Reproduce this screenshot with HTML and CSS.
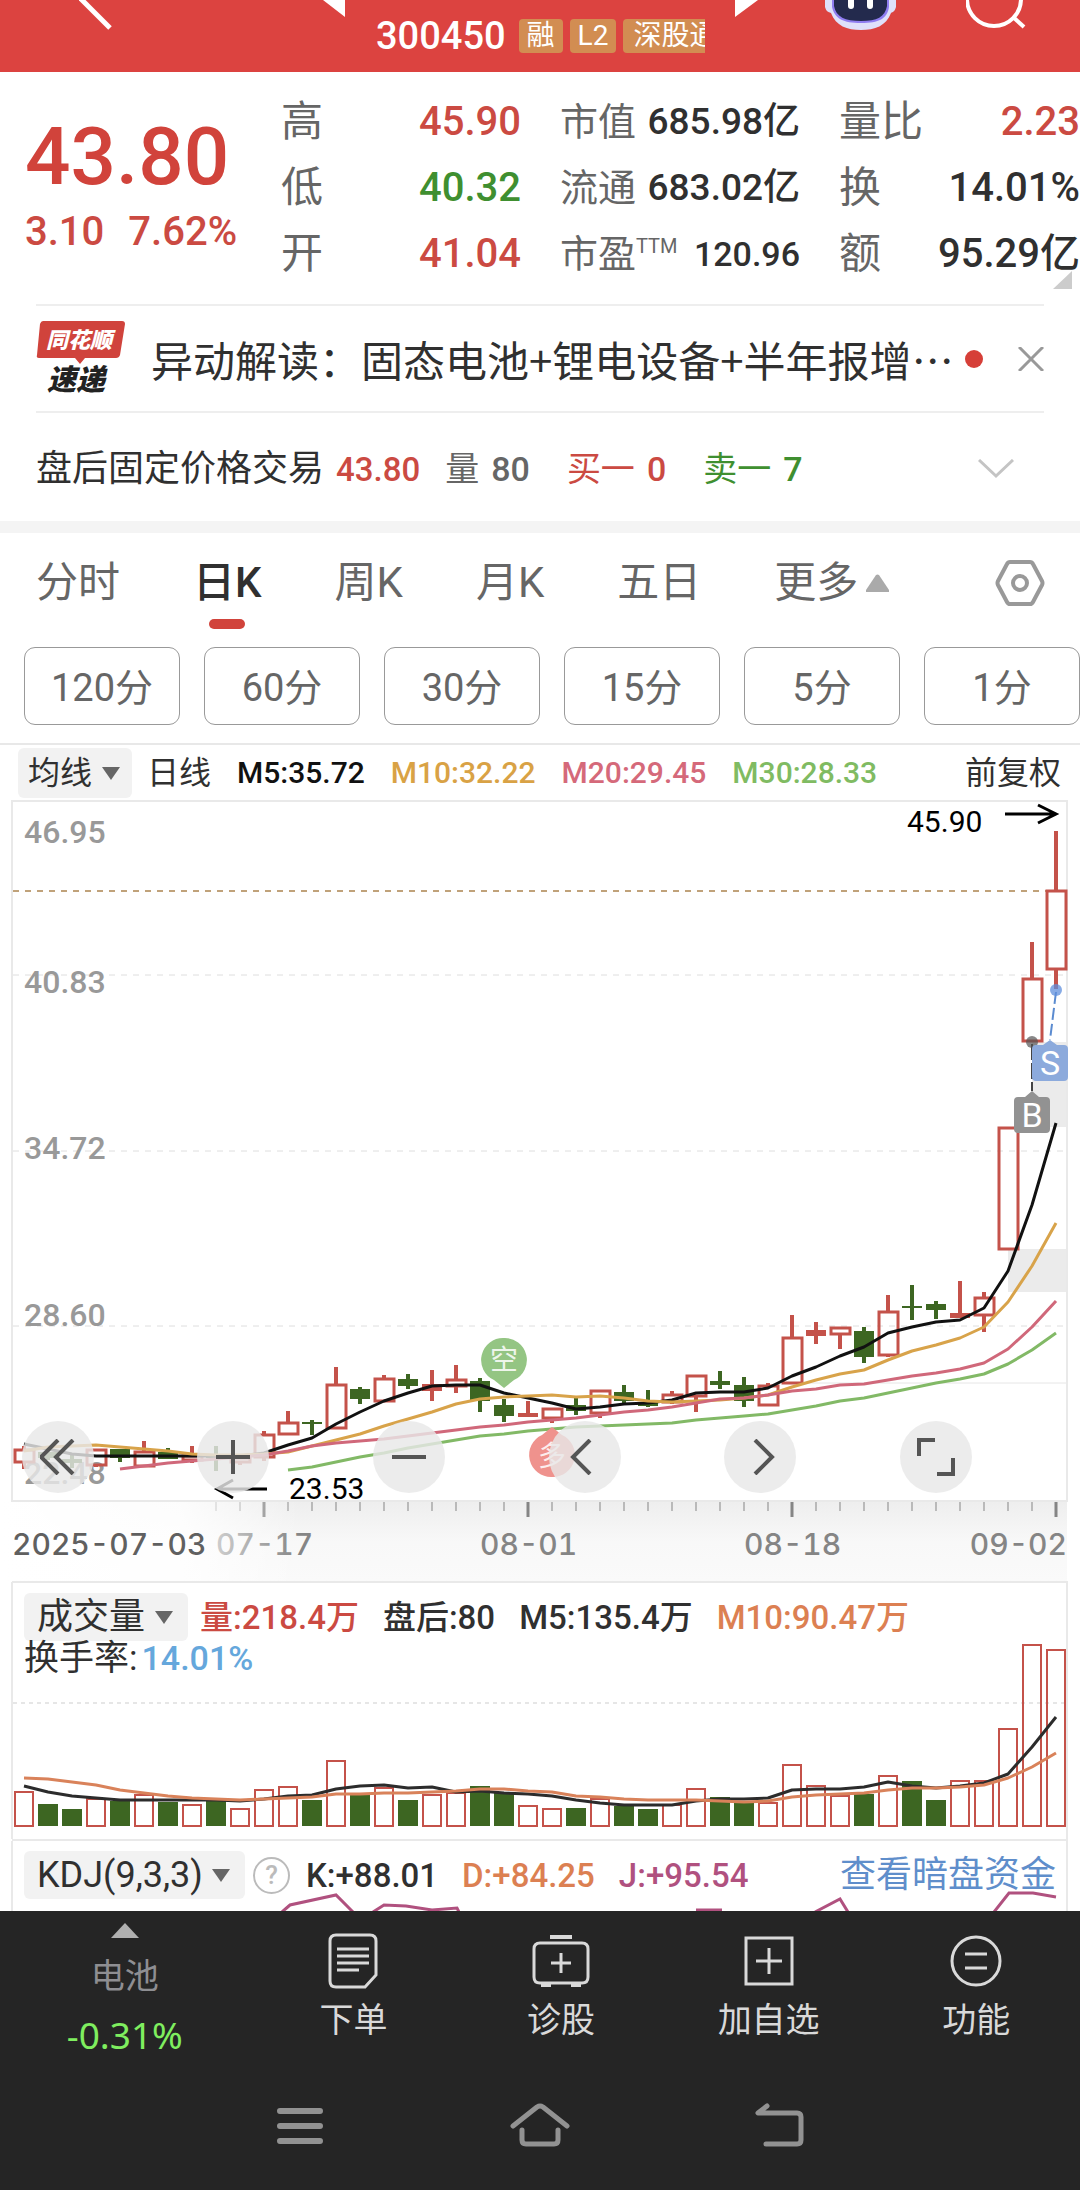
FILE: index.html
```html
<!DOCTYPE html>
<html lang="zh-CN">
<head>
<meta charset="utf-8">
<meta name="viewport" content="width=device-width, initial-scale=1">
<title>300450</title>
<link rel="stylesheet" href="styles.css">
</head>
<body>
<header class="topbar">
  <button class="icon-btn back" aria-label="返回"><svg width="34" height="32" viewBox="0 0 34 32"><path d="M1 -2L31 28" fill="none" stroke="#fff" stroke-width="5"/></svg></button>
  <button class="icon-btn prev" aria-label="上一只"><svg width="22" height="18" viewBox="0 0 22 18"><path d="M0 0H22V17z" fill="#fff"/></svg></button>
  <div class="stock"><span class="code">300450</span><span class="tag">融</span><span class="tag">L2</span><span class="tag clip">深股通</span></div>
  <button class="icon-btn next" aria-label="下一只"><svg width="23" height="18" viewBox="0 0 23 18"><path d="M0 0H23L0 17z" fill="#fff"/></svg></button>
  <button class="icon-btn robot" aria-label="助手"><svg width="72" height="32" viewBox="0 0 72 32"><path d="M0 0H71V7C70 11 68 12 66 13C61 26 50 30 36 30S11 26 6 13C3 12 1 11 0 7z" fill="#dfe0fa"/><path d="M7 0H64V7C62 19 54 23 36 23S10 19 7 7z" fill="#8f7df0"/><path d="M9 0H62V6C60 17 52 21 36 21S11 17 9 6z" fill="#232a4d"/><path d="M26 -3V6M45 -3V6" stroke="#fff" stroke-width="6" stroke-linecap="round"/></svg></button>
  <button class="icon-btn search" aria-label="搜索"><svg width="60" height="30" viewBox="0 0 60 30"><circle cx="28" cy="-1" r="27" fill="none" stroke="#fff" stroke-width="4"/><path d="M47 17L58 27" stroke="#fff" stroke-width="4"/></svg></button>
</header>

<main>
  <section class="quote">
    <div class="last">
      <strong class="price">43.80</strong>
      <p class="change"><span>3.10</span><span>7.62%</span></p>
    </div>
    <dl class="stats">
      <div><dt>高</dt><dd class="up">45.90</dd></div>
      <div><dt>低</dt><dd class="down">40.32</dd></div>
      <div><dt>开</dt><dd class="up">41.04</dd></div>
    </dl>
    <dl class="stats small">
      <div><dt>市值</dt><dd>685.98亿</dd></div>
      <div><dt>流通</dt><dd>683.02亿</dd></div>
      <div><dt>市盈<sup>TTM</sup></dt><dd class="ratio">120.96</dd></div>
    </dl>
    <dl class="stats">
      <div><dt>量比</dt><dd class="up">2.23</dd></div>
      <div><dt>换</dt><dd>14.01%</dd></div>
      <div><dt>额</dt><dd>95.29亿</dd></div>
    </dl>
    <svg class="corner" width="19" height="18" viewBox="0 0 19 18"><path d="M19 0V18H0z" fill="#ccc"/></svg>
  </section>

  <section class="news">
    <svg class="brand" width="90" height="76" viewBox="0 0 90 76"><path d="M7 0H86Q89 0 89 3L84 34Q83 37 80 37H49L44 43L39 37H3Q0 37 1 34L4 3Q5 0 7 0z" fill="#d0433c"/><text x="10" y="27" class="brand-top">同花顺</text><text x="11" y="69" class="brand-bottom">速递</text></svg>
    <a class="headline" href="#">异动解读：固态电池+锂电设备+半年报增<span>⋯</span></a>
    <i class="dot"></i>
    <button class="icon-btn close" aria-label="关闭"><svg width="26" height="24" viewBox="0 0 26 24"><path d="M1 0L25 24M25 0L1 24" stroke="#999" stroke-width="3"/></svg></button>
  </section>

  <section class="after">
    <span>盘后固定价格交易</span><span class="up num">43.80</span>
    <span class="grey pair vol"><span>量</span><span>80</span></span>
    <span class="up pair"><span>买一</span><span>0</span></span>
    <span class="down pair"><span>卖一</span><span>7</span></span>
    <button class="icon-btn expand" aria-label="展开"><svg width="36" height="20" viewBox="0 0 36 20"><path d="M1 1L18 17L35 1" fill="none" stroke="#c4c4c4" stroke-width="3"/></svg></button>
  </section>

  <nav class="periods">
    <button>分时</button><button class="active">日K</button><button>周K</button><button>月K</button><button>五日</button><button class="more">更多<svg width="23" height="18" viewBox="0 0 23 18"><path d="M10 1Q11.500 0 13 1L23 16V18H0V16z" fill="#aaa"/></svg></button>
    <button class="settings" aria-label="设置"><svg width="50" height="46" viewBox="0 0 50 46"><path d="M15 2H35Q37 2 38 4L47 21Q48 23 47 25L38 42Q37 44 35 44H15Q13 44 12 42L3 25Q2 23 3 21L12 4Q13 2 15 2z" fill="none" stroke="#999" stroke-width="4"/><circle cx="25" cy="23" r="7" fill="none" stroke="#999" stroke-width="4"/></svg></button>
  </nav>
  <div class="minutes">
    <button>120分</button><button>60分</button><button>30分</button><button>15分</button><button>5分</button><button>1分</button>
  </div>

  <section class="averages">
    <label class="picker"><select aria-label="主图指标"><option>均线</option></select><i class="caret"></i></label>
    <span>日线</span><span class="m5">M5:35.72</span><span class="m10">M10:32.22</span><span class="m20">M20:29.45</span><span class="m30">M30:28.33</span>
    <button class="adjust">前复权</button>
  </section>

  <section class="kline">
    <svg class="plot" viewBox="0 800 1080 781" role="img" aria-label="日K线">
      <defs>
        <linearGradient id="axisShade" x1="0" y1="0" x2="0" y2="1"><stop offset="0" stop-color="#eee"/><stop offset=".5" stop-color="#f8f8f8"/><stop offset="1" stop-color="#fafafa"/></linearGradient>
        <linearGradient id="axisFade" x1="0" y1="0" x2="1" y2="0"><stop offset="0" stop-color="#fff"/><stop offset=".6" stop-color="#fff" stop-opacity=".85"/><stop offset="1" stop-color="#fff" stop-opacity="0"/></linearGradient>
      </defs>
      <g class="grid"><path d="M13 975H1067M13 1151H1067M13 1326H1067"/></g>
      <path d="M792 1383H1067" stroke="#e6e6e6"/>
      <path d="M13 891H1056" stroke="#c0a27a" stroke-width="2" stroke-dasharray="6 6"/>
      <path d="M1032 1042h36v85h-36zM1008 1249h60v43h-60z" fill="#ebebeb"/>
      <path d="M12 801H1067V1501H12z" fill="none" stroke="#e9e9e9" stroke-width="2"/>
      <g class="scale"><text x="24" y="843">46.95</text><text x="24" y="993">40.83</text><text x="24" y="1159">34.72</text><text x="24" y="1326">28.60</text><text x="24" y="1484">22.48</text></g>
      <g id="candles"></g>
      <g id="averages" class="lines"></g>
      <path d="M1056 992L1050 1040" stroke="#5b8bd0" stroke-width="2" stroke-dasharray="12 4"/>
      <circle cx="1056" cy="990" r="6" fill="#5f8fdc" fill-opacity=".75"/>
      <path d="M1032 1044V1091" stroke="#444" stroke-width="2" stroke-dasharray="16 3"/>
      <circle cx="1032" cy="1042" r="6" fill="#555" fill-opacity=".7"/>
      <path d="M1036 1045H1043L1050 1040L1057 1045H1064Q1068 1045 1068 1049V1077Q1068 1081 1064 1081H1036Q1032 1081 1032 1077V1049Q1032 1045 1036 1045z" fill="#8caadc"/>
      <path d="M1018 1097H1025L1032 1091L1039 1097H1046Q1050 1097 1050 1101V1129Q1050 1133 1046 1133H1018Q1014 1133 1014 1129V1101Q1014 1097 1018 1097z" fill="#929292"/>
      <text class="trade" x="1050" y="1075">S</text><text class="trade" x="1032" y="1127">B</text>
      <path d="M504 1338A22 22 0 0 1 514 1380L504 1388L494 1380A22 22 0 0 1 504 1338z" fill="#94c583"/><text class="signal" x="504" y="1370">空</text>
      <path d="M552 1477A22 22 0 0 1 542 1435L552 1427L562 1435A22 22 0 0 1 552 1477z" fill="#ef928d"/><text class="signal" x="552" y="1466">多</text>
      <text class="peak" x="907" y="832">45.90</text><path class="arrow" d="M1005 814H1056M1038 805L1056 814L1038 823"/>
      <text class="peak" x="289" y="1499">23.53</text><path class="arrow" d="M267 1489H217M233 1480L217 1489L233 1498"/>
      <path d="M0 1502H1067V1581H0z" fill="url(#axisShade)"/>
      <g id="ticks"></g>
      <g class="dates"><text x="216" y="1555">07-17</text><text x="480" y="1555">08-01</text><text x="744" y="1555">08-18</text><text x="1067" y="1555" text-anchor="end">09-02</text></g>
      <path d="M0 1502H300V1581H0z" fill="url(#axisFade)"/>
      <text class="first-date" x="12" y="1555">2025-07-03</text>
    </svg>
    <div class="controls">
      <button aria-label="最左"><svg width="36" height="36" viewBox="0 0 36 36"><path d="M18 1L1 18L18 35M33 1L16 18L33 35"/></svg></button>
      <button aria-label="放大"><svg width="36" height="36" viewBox="0 0 36 36"><path d="M1 18H35M18 1V35"/></svg></button>
      <button aria-label="缩小"><svg width="36" height="36" viewBox="0 0 36 36"><path d="M1 18H35"/></svg></button>
      <button aria-label="左移"><svg width="36" height="36" viewBox="0 0 36 36"><path d="M23 1L6 18L23 35"/></svg></button>
      <button aria-label="右移"><svg width="36" height="36" viewBox="0 0 36 36"><path d="M13 1L30 18L13 35"/></svg></button>
      <button aria-label="全屏"><svg width="38" height="38" viewBox="0 0 38 38"><path d="M18 2H2V18M36 20V36H20"/></svg></button>
    </div>
  </section>

  <section class="panel volume">
    <div class="legend">
      <label class="picker"><select aria-label="副图指标"><option>成交量</option></select><i class="caret"></i></label>
      <span class="up">量:218.4万</span><span>盘后:80</span><span>M5:135.4万</span><span class="orange">M10:90.47万</span>
    </div>
    <p class="turnover">换手率:<span class="blue">14.01%</span></p>
    <svg class="plot" viewBox="0 1582 1080 257" role="img" aria-label="成交量">
      <path d="M13 1703H1067" stroke="#e6e6e6" stroke-width="2" stroke-dasharray="4 4"/>
      <path d="M12 1582V1839M1067 1582V1839" stroke="#e9e9e9" stroke-width="2"/>
      <g id="volumes"></g><g id="volumeAverages" class="lines"></g>
    </svg>
  </section>

  <section class="panel kdj">
    <div class="legend">
      <label class="picker"><select aria-label="技术指标"><option>KDJ(9,3,3)</option></select><i class="caret"></i></label>
      <button class="help" aria-label="说明">?</button>
      <span>K:+88.01</span><span class="orange">D:+84.25</span><span class="purple">J:+95.54</span>
      <a href="#">查看暗盘资金</a>
    </div>
    <svg class="plot" viewBox="0 1841 1080 70" role="img" aria-label="KDJ">
      <path d="M12 1841V1911M1067 1841V1911" stroke="#e9e9e9" stroke-width="2"/>
      <path d="M282 1912L290 1905L336 1895L353 1912M373 1912L384 1905L406 1906L432 1910L457 1908L459 1912M696 1910H722M815 1912L840 1899L848 1912M994 1912L1009 1893H1033L1056 1897" fill="none" stroke="#b0517f" stroke-width="3"/>
    </svg>
  </section>
</main>

<footer class="dock">
  <nav class="actions">
    <a class="sector" href="#"><svg width="28" height="15" viewBox="0 0 28 15"><path d="M14 0L28 15H0z" fill="#b0b0b0"/></svg><span class="name">电池</span><span class="pct">-0.31%</span></a>
    <button><svg width="54" height="56" viewBox="0 0 54 56"><path d="M10 2H44Q50 2 50 8V42L39 54H10Q4 54 4 48V8Q4 2 10 2zM11 16H43M11 23H43M11 30H43M11 37H33"/></svg>下单</button>
    <button><svg width="58" height="56" viewBox="0 0 58 56"><path d="M18 4H40" stroke-width="4"/><path d="M8 10H50Q56 10 56 16V44Q56 50 50 50H8Q2 50 2 44V16Q2 10 8 10zM19 30H39M29 20V40"/><path d="M9 52H19M39 52H49" stroke-width="4"/></svg>诊股</button>
    <button><svg width="50" height="56" viewBox="0 0 50 56"><path d="M2 5H48V51H2zM12 28H38M25 15V41"/></svg>加自选</button>
    <button><svg width="54" height="56" viewBox="0 0 54 56"><circle cx="27" cy="28" r="24"/><path d="M16 21H38M16 35H38"/></svg>功能</button>
  </nav>
  <nav class="system">
    <button aria-label="最近任务"><svg width="60" height="46" viewBox="0 0 60 46"><path d="M10 8H50M10 23H50M10 38H50"/></svg></button>
    <button aria-label="主页"><svg width="60" height="46" viewBox="0 0 60 46"><path d="M3 23L27 4Q30 2 33 4L57 23M12 27V37Q12 41 16 41H44Q48 41 48 37V27" stroke-width="5"/></svg></button>
    <button aria-label="返回上级"><svg width="60" height="46" viewBox="0 0 60 46"><path d="M17 3L8 10H47Q51 10 51 14V37Q51 41 47 41H16" stroke-width="5"/></svg></button>
  </nav>
</footer>
<script src="chart.js"></script>
</body>
</html>
```
FILE: styles.css
```css
* { box-sizing: border-box; }
body, p, dl, dd { margin: 0; }
body { background: #fff; color: #303030; font-family: Roboto, "Noto Sans CJK SC", sans-serif; font-size: 34px; line-height: 1; }
svg { display: block; }
button, select { margin: 0; padding: 0; border: 0; background: none; color: inherit; font: inherit; line-height: inherit; }
a { color: inherit; text-decoration: none; }
.up { color: #cb4a42; }
.down { color: #3f8f30; }
.grey { color: #666; }
.orange { color: #dc8052; }
.blue { color: #65a7dc; }
.purple { color: #b0517f; }

.topbar { display: grid; grid-template-columns: 79fr 244fr 53fr 359fr 90fr 141fr 114fr; height: 72px; background: #dc4340; overflow: hidden; }
.icon-btn { display: flex; align-items: flex-start; }
.back { grid-column: 2; margin-right: auto; }
.topbar .prev { grid-column: 3; }
.stock { display: flex; align-items: center; gap: 7px; padding-top: 6px; color: #fff; font-weight: 500; overflow: hidden; width: 329px; height: 66px; white-space: nowrap; }
.topbar .stock { grid-column: 4; }
.code { font-size: 38px; margin-right: 6px; }
.tag { flex: none; padding: 0 8px; border-radius: 4px; background: #d28d52; font-size: 28px; font-weight: 400; line-height: 34px; }
.tag.clip { padding: 0 0 0 10px; }

.quote { position: relative; display: grid; grid-template-columns: 217fr 240fr 240fr 241fr; column-gap: 39px; padding: 17px 0 17px 25px; font-weight: 500; }
.price { display: block; margin-top: 26px; font-size: 80px; font-weight: 500; line-height: 84px; color: #d1433b; }
.change { display: flex; gap: 24px; font-size: 40px; line-height: 66px; color: #cb4a42; white-space: nowrap; }
.stats { font-size: 40px; line-height: 66px; }
.stats div { display: flex; justify-content: space-between; height: 66px; white-space: nowrap; }
.stats dt { color: #666; font-size: 42px; font-weight: 400; }
.small { font-size: 37px; }
.small dt { font-size: 38px; }
.small .ratio { font-size: 34px; }
sup { font-size: 20px; line-height: 20px; }
.corner { position: absolute; right: 8px; bottom: 15px; }

.news { display: flex; align-items: center; height: 109px; margin: 0 36px; border-top: 2px solid #eee; border-bottom: 2px solid #eee; }
.brand { flex: none; overflow: visible; }
.brand-top { fill: #fff; font: italic 900 22px "Noto Sans CJK SC", sans-serif; }
.brand-bottom { fill: #222; font: italic 900 29px "Noto Sans CJK SC", sans-serif; }
.headline { margin-left: 25px; font: 42px/60px "Noto Sans CJK SC", sans-serif; white-space: nowrap; }
.dot { flex: none; width: 18px; height: 18px; margin-left: auto; border-radius: 50%; background: #d63f38; }
.close { margin-left: 35px; }

.after { display: flex; align-items: center; height: 120px; padding: 4px 66px 0 36px; border-bottom: 12px solid #f4f4f4; font-size: 36px; white-space: nowrap; }
.num, .pair { font-size: 34px; font-weight: 500; }
.num { margin-left: 12px; font-size: 33px; }
.pair { display: flex; gap: 12px; margin-left: 37px; }
.pair span:first-child { font-weight: 400; }
.pair.vol { margin-left: 25px; }
.expand { margin-left: auto; }

.periods { display: flex; gap: 73px; height: 100px; padding: 0 35px 0 36px; font-size: 42px; color: #666; white-space: nowrap; }
.periods .active { position: relative; color: #303030; font-weight: 500; }
.active::after { content: ""; position: absolute; left: 50%; bottom: 4px; width: 36px; height: 10px; margin-left: -18px; border-radius: 5px; background: #d1433b; }
.more { display: flex; align-items: center; gap: 8px; }
.settings { margin-left: auto; }
.minutes { display: grid; grid-template-columns: repeat(6, 1fr); gap: 24px; margin-top: 14px; padding: 0 0 18px 24px; border-bottom: 2px solid #e8e8e8; }
.minutes button { height: 78px; padding-top: 3px; border: 1px solid #999; border-radius: 11px; color: #666; font-size: 38px; }

.averages { display: flex; align-items: center; gap: 26px; height: 55px; padding: 1px 19px 0 18px; font-size: 30px; font-weight: 500; white-space: nowrap; }
.averages .picker { height: 50px; padding: 0 12px 0 10px; margin-right: -11px; }
.averages > span:not([class]), .averages select, .adjust { font-size: 32px; font-weight: 400; }
.m5 { color: #111; }
.m10 { color: #d9a245; }
.m20 { color: #d5697a; }
.m30 { color: #80bb62; }
.adjust { margin-left: auto; }
.picker { display: flex; flex: none; align-items: center; gap: 9px; height: 48px; border-radius: 6px; background: #f2f2f2; }
.picker select { appearance: none; line-height: 44px; }
.caret { border: 9px solid transparent; border-top: 13px solid #666; border-bottom: 0; }

.kline { position: relative; }
.plot { width: 100%; height: auto; }
.grid { stroke: #dedede; stroke-dasharray: 6 6; }
.scale { fill: #999; font-size: 32px; font-weight: 500; }
.lines { fill: none; stroke-width: 3; stroke-linejoin: round; }
.trade { fill: #fff; font-size: 34px; text-anchor: middle; }
.signal { fill: #fff; fill-opacity: .85; font-size: 28px; text-anchor: middle; }
.peak { fill: #000; font-size: 30px; }
.arrow { fill: none; stroke: #000; stroke-width: 3; }
.dates { fill: #858585; font: 500 30px Inter, sans-serif; font-variant-numeric: tabular-nums; }
.first-date { fill: #606060; font: 500 30px Inter, sans-serif; font-variant-numeric: tabular-nums; }
.controls { position: absolute; left: 2%; right: 10%; bottom: 88px; display: flex; justify-content: space-between; }
.controls button { display: flex; align-items: center; justify-content: center; width: 72px; height: 72px; border-radius: 50%; background: rgba(232, 232, 232, .82); }
.controls svg { fill: none; stroke: #555; stroke-width: 4; }

.panel { display: grid; background: linear-gradient(#e9e9e9, #e9e9e9) 12px 0 / calc(100% - 24px) 2px no-repeat; white-space: nowrap; overflow: hidden; }
.panel > * { grid-area: 1 / 1; }
.legend { z-index: 1; display: flex; align-items: center; align-self: start; gap: 24px; height: 48px; margin-top: 12px; padding: 0 24px; font-size: 33px; font-weight: 500; }
.panel .picker { padding: 0 15px 0 13px; font-size: 36px; font-weight: 400; margin-right: -12px; }
.turnover { z-index: 1; align-self: start; margin: 59px 0 0 24px; font-size: 35px; line-height: 36px; }
.turnover .blue { margin-left: 4px; font-size: 34px; font-weight: 500; }
.volume .plot { margin-top: 1px; }
.kdj .plot { margin-top: 2px; }
.kdj .picker { margin-right: -16px; }
.help { width: 37px; height: 37px; margin-right: -8px; border: 2px solid #bbb; border-radius: 50%; color: #bbb; font-size: 26px; line-height: 33px; }
.legend a { margin-left: auto; color: #5f8ecb; font-size: 36px; font-weight: 400; }

.dock { background: #252525; color: #d9d9d9; }
.actions { display: grid; grid-template-columns: 249fr repeat(4, 207fr); padding-top: 12px; height: 162px; }
.actions > * { display: flex; flex-direction: column; align-items: center; font-size: 34px; line-height: 40px; white-space: nowrap; }
.actions button { padding-top: 10px; gap: 11px; }
.actions button svg { fill: none; stroke: #d9d9d9; stroke-width: 3; }
.name { margin-top: 18px; color: #8e8e92; }
.pct { margin-top: 19px; color: #7fee5f; font: 37px/40px "Noto Sans", sans-serif; }
.system { display: flex; justify-content: center; gap: 180px; height: 117px; padding-top: 30px; }
.system button { height: 46px; }
.system svg { fill: none; stroke: #929292; stroke-width: 6; stroke-linecap: round; stroke-linejoin: round; }
```
FILE: chart.js
```js
const NS = 'http://www.w3.org/2000/svg';
const RED = '#c4524a';
const GREEN = '#3d6622';
const xAt = i => 24 + 24 * i;

function add(parent, name, attrs) {
  const el = document.createElementNS(NS, name);
  for (const key in attrs) el.setAttribute(key, attrs[key]);
  document.getElementById(parent).appendChild(el);
}

// kind (r hollow, f filled red, g green), high, body top, body bottom, low
const candles = `r 1446 1450 1462 1469,g 1450 1452 1458 1460,g 1453 1459 1463 1468,r 1450 1450 1465 1467,g 1449 1449 1458 1462,r 1441 1452 1466 1466,g 1448 1452 1459 1459,r 1446 1456 1460 1463,g 1446 1456 1458 1471,r 1457 1458 1462 1465,r 1431 1435 1457 1461,r 1411 1423 1434 1434,g 1420 1422 1424 1435,r 1367 1385 1428 1428,g 1387 1389 1399 1404,r 1375 1379 1401 1401,g 1374 1379 1386 1389,f 1370 1384 1391 1401,r 1365 1380 1386 1393,g 1378 1381 1401 1412,g 1399 1405 1416 1422,f 1401 1413 1417 1417,r 1408 1409 1418 1423,g 1398 1405 1411 1415,r 1391 1391 1413 1418,g 1385 1392 1401 1403,g 1390 1403 1406 1407,r 1391 1395 1402 1404,r 1376 1376 1396 1412,g 1371 1381 1385 1389,g 1377 1385 1401 1407,r 1383 1386 1405 1405,r 1315 1338 1383 1383,f 1322 1330 1336 1344,r 1328 1328 1334 1349,g 1327 1331 1357 1363,r 1295 1312 1355 1357,g 1285 1306 1308 1320,g 1301 1304 1310 1319,f 1281 1313 1318 1318,r 1292 1298 1315 1332,r 1128 1128 1249 1249,r 942 979 1041 1041,r 831 891 969 989`;
candles.split(',').forEach((row, i) => {
  const [kind, ...v] = row.split(' ');
  const [high, top, bottom, low] = v.map(Number);
  const color = kind === 'g' ? GREEN : RED;
  const x = xAt(i);
  add('candles', 'path', { d: `M${x} ${high}V${top}M${x} ${bottom}V${low}`, stroke: color, 'stroke-width': 4 });
  if (kind === 'r') add('candles', 'rect', { x: x - 9, y: top, width: 19, height: bottom - top, fill: 'none', stroke: color, 'stroke-width': 3 });
  else add('candles', 'rect', { x: x - 10, y: top, width: 20, height: bottom - top, fill: color });
});

function line(parent, start, values, color) {
  const points = values.split(' ').map((y, i) => `${xAt(start + i)},${y}`).join(' ');
  add(parent, 'polyline', { points, stroke: color });
}
line('averages', 11, '1470 1467 1462 1457 1453 1448 1444 1440 1436 1434 1431 1429 1427 1426 1425 1424 1423 1420 1418 1416 1414 1410 1406 1401 1398 1393 1388 1383 1379 1374 1364 1350 1333', '#82b966');
line('averages', 0, '1444 1449 1454 1456 1456 1456 1456 1456 1456 1456 1453 1445 1438 1424 1412 1401 1393 1386 1385 1385 1393 1398 1403 1409 1407 1404 1403 1400 1393 1392 1392 1388 1376 1367 1356 1347 1333 1327 1322 1320 1308 1271 1205 1123', '#111');
line('averages', 0, '1451 1447 1446 1445 1447 1449 1451 1454 1455 1455 1454 1452 1446 1440 1434 1426 1419 1412 1404 1399 1397 1396 1395 1397 1396 1398 1401 1402 1401 1400 1398 1395 1387 1380 1374 1370 1360 1351 1345 1338 1327 1302 1266 1223', '#d8a34a');
line('averages', 4, '1469 1466 1463 1461 1459 1457 1455 1451 1446 1443 1441 1439 1436 1433 1430 1427 1425 1422 1420 1418 1415 1412 1410 1407 1403 1399 1398 1395 1391 1389 1385 1384 1380 1376 1373 1369 1363 1349 1327 1301', '#d0687a');

for (let i = 8; i < 44; i++) {
  const major = [10, 21, 32, 43].includes(i);
  add('ticks', 'path', { d: `M${xAt(i)} 1502V${major ? 1517 : 1511}`, stroke: '#858585', 'stroke-width': major ? 3 : 1 });
}

const volumes = 'r1792 g1804 g1809 r1799 g1801 r1795 g1802 r1805 g1801 r1809 r1790 r1787 g1800 r1761 g1794 r1788 g1800 r1795 r1793 g1786 g1793 r1806 r1809 g1808 r1799 g1806 g1809 r1805 r1789 g1797 g1801 r1803 r1765 r1786 r1796 g1794 r1776 g1781 g1800 r1781 r1781 r1729 r1645 r1650';
volumes.split(' ').forEach((bar, i) => {
  const y = Number(bar.slice(1));
  if (bar[0] === 'r') add('volumes', 'rect', { x: xAt(i) - 9, y, width: 18, height: 1826 - y, fill: 'none', stroke: RED, 'stroke-width': 2 });
  else add('volumes', 'rect', { x: xAt(i) - 10, y, width: 20, height: 1826 - y, fill: GREEN });
});
line('volumeAverages', 0, '1786 1792 1796 1798 1800 1800 1800 1800 1800 1801 1799 1796 1795 1789 1786 1785 1788 1787 1792 1791 1793 1794 1796 1800 1803 1805 1805 1805 1801 1799 1799 1798 1790 1789 1789 1787 1782 1786 1788 1786 1783 1774 1747 1717', '#2c2c2c');
line('volumeAverages', 0, '1778 1779 1782 1785 1790 1793 1796 1798 1799 1800 1799 1798 1797 1794 1794 1793 1793 1792 1791 1789 1789 1791 1792 1796 1797 1799 1800 1800 1800 1801 1802 1801 1797 1795 1794 1793 1790 1788 1788 1787 1785 1778 1767 1753', '#d9825a');
```
